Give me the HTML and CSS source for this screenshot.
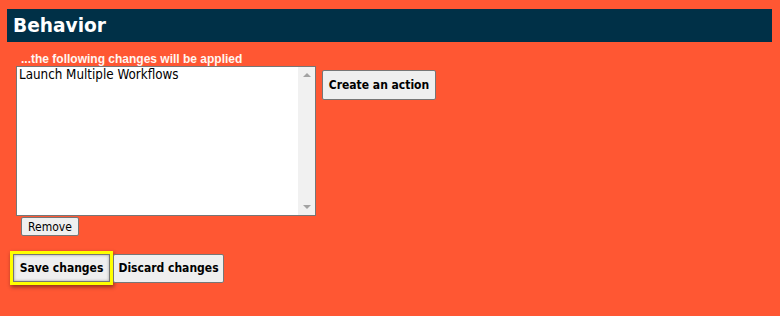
FILE: index.html
```html
<!DOCTYPE html>
<html>
<head>
<meta charset="utf-8">
<link rel="stylesheet" href="styles.css">
</head>
<body>
<div class="header">Behavior</div>
<div class="section">
  <div class="label">...the following changes will be applied</div>
  <div class="row">
    <div class="listbox">
      <div class="items"><div class="item">Launch Multiple Workflows</div></div>
      <div class="scrollbar">
        <span class="arrow up"></span>
        <span class="arrow down"></span>
      </div>
    </div>
    <button class="btn bold create">Create an action</button>
  </div>
  <button class="btn remove">Remove</button>
</div>
<div class="actions">
  <span class="focus-ring"><button class="btn bold save">Save changes</button></span>
  <button class="btn bold discard">Discard changes</button>
</div>
</body>
</html>
```
FILE: styles.css
```css
html, body {
  margin: 0;
  background: #ff5733;
}
body {
  padding: 9px 8px 0 7px;
  font-family: "DejaVu Sans", Verdana, sans-serif;
  height: 316px;
  box-sizing: border-box;
}
.header {
  background: #003047;
  color: #fff;
  height: 33px;
  line-height: 33px;
  padding-left: 6px;
  font-weight: bold;
  font-size: 18.6px;
}
.section {
  padding-left: 9px;
}
.label {
  margin-top: 10px;
  padding-left: 5px;
  font-family: "Liberation Sans", Arial, sans-serif;
  font-size: 12px;
  line-height: 14px;
  height: 14px;
  font-weight: bold;
  color: #fff5f0;
  white-space: nowrap;
}
.row {
  display: flex;
  align-items: flex-start;
  gap: 6px;
}
.listbox {
  width: 300px;
  height: 150px;
  box-sizing: border-box;
  border: 1px solid #767676;
  background: #fff;
  display: flex;
}
.items {
  flex: 1;
  padding: 0 2px;
}
.item {
  font-family: "DejaVu Sans Condensed", "DejaVu Sans", sans-serif;
  font-stretch: condensed;
  font-size: 13.3px;
  line-height: 16px;
  color: #000;
  white-space: nowrap;
}
.scrollbar {
  width: 17px;
  background: #f1f1f1;
  display: flex;
  flex-direction: column;
  justify-content: space-between;
  align-items: center;
  padding: 6px 0;
}
.arrow {
  width: 0;
  height: 0;
  border-left: 4px solid transparent;
  border-right: 4px solid transparent;
}
.arrow.up { border-bottom: 4px solid #a3a3a3; }
.arrow.down { border-top: 4px solid #a3a3a3; }
.btn {
  font-family: "DejaVu Sans Condensed", "DejaVu Sans", sans-serif;
  font-stretch: condensed;
  background: #efefef;
  border: 1px solid #767676;
  border-radius: 2px;
  color: #000;
  padding: 0;
  box-sizing: border-box;
  white-space: nowrap;
}
.bold {
  font-weight: bold;
  font-size: 12px;
}
.create {
  margin-top: 4px;
  height: 30px;
  width: 114px;
}
.remove {
  display: block;
  margin-top: 1px;
  margin-left: 5px;
  height: 19px;
  width: 58px;
  font-size: 12px;
}
.actions {
  margin-top: 15px;
  margin-left: 3px;
  display: flex;
  align-items: center;
}
.focus-ring {
  display: inline-flex;
  border: 3px solid #ffff00;
  box-shadow: 1px 2px 4px rgba(0,0,0,0.45);
}
.save {
  height: 28px;
  width: 97px;
  border-radius: 0;
  box-shadow: inset 0 0 3px rgba(0,0,0,0.35);
}
.discard {
  height: 29px;
  width: 111px;
}
```
